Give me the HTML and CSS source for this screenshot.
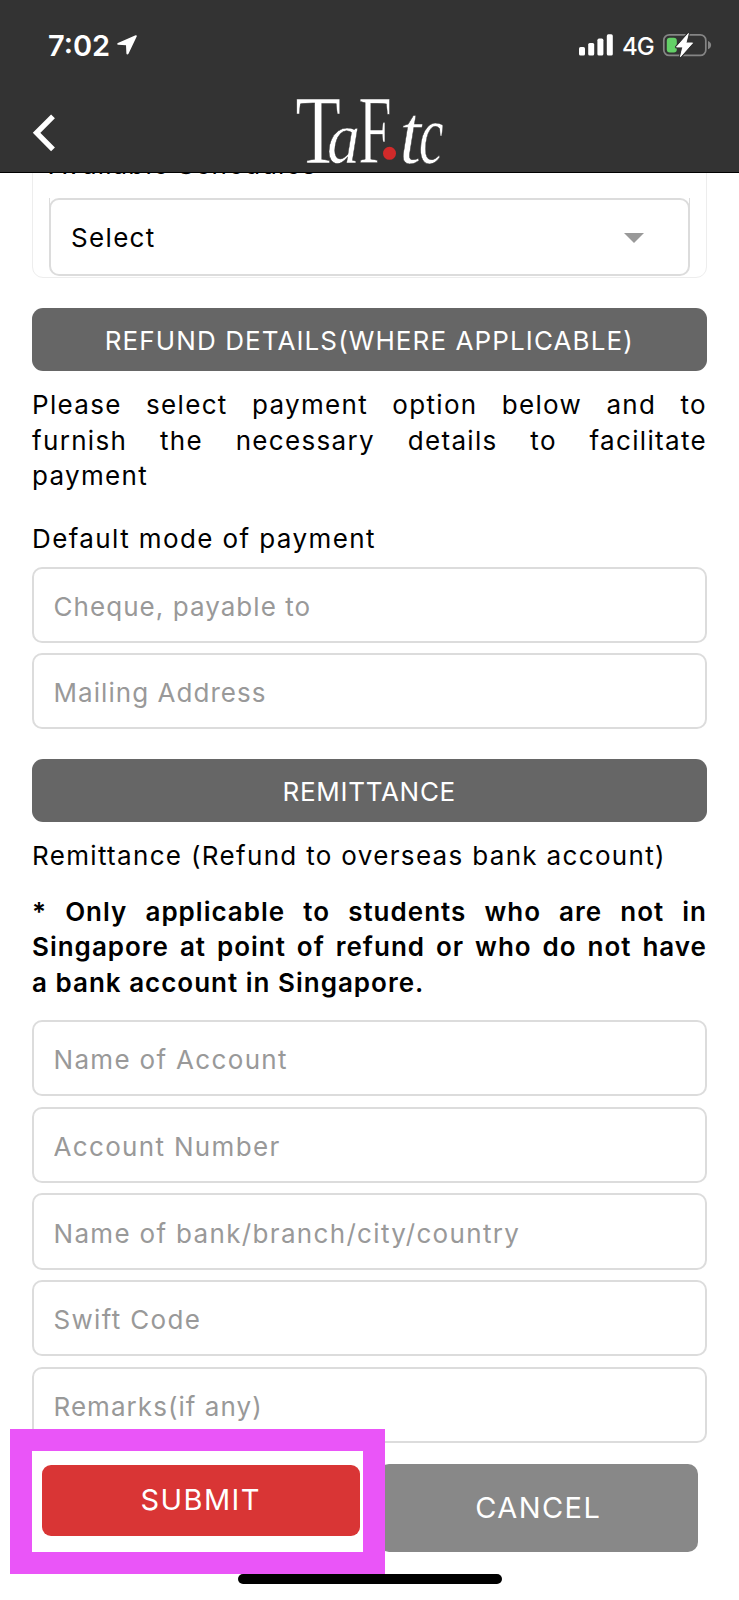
FILE: index.html
```html
<!DOCTYPE html>
<html lang="en">
<head>
    <meta charset="UTF-8">
    <meta name="viewport" content="width=device-width, initial-scale=1.0">
    <title>TaF.tc - Refund Details</title>
    <link rel="stylesheet" href="styles.css">
</head>
<body>
    <header class="header">
        <!-- Phone status bar -->
        <div class="status-bar">
            <div class="status-left">
                <span class="time">7:02</span>
                <svg class="location" width="20" height="20" viewBox="0 0 20 20">
                    <path d="M18.6 0.3 L0.9 7.9 C-0.2 8.5 0 9.7 1.2 9.8 L9 10.2 L9.4 18.6 C9.6 19.8 10.9 19.9 11.5 18.8 L19.7 1.6 C20.1 0.6 19.5 0 18.6 0.3 Z" fill="#fff"/>
                </svg>
            </div>
            <div class="status-right">
                <svg class="signal" width="34" height="22" viewBox="0 0 34 22" fill="#fff">
                    <rect x="0" y="13" width="6" height="8.5" rx="1.6"/>
                    <rect x="9.2" y="9" width="6" height="12.5" rx="1.6"/>
                    <rect x="18.4" y="4.6" width="6" height="16.9" rx="1.6"/>
                    <rect x="27.8" y="0.3" width="6" height="21.2" rx="1.6"/>
                </svg>
                <span class="network">4G</span>
                <svg class="battery" width="50" height="26" viewBox="0 0 50 26">
                    <rect x="1.8" y="2.8" width="42" height="20.6" rx="5.5" fill="none" stroke="#858585" stroke-width="1.7"/>
                    <path d="M46 9 C50.2 10.4 50.2 15.8 46 17.2 Z" fill="#858585"/>
                    <rect x="4.8" y="5.8" width="10" height="14.8" rx="3" fill="#63d067"/>
                    <path d="M26.4 1.5 L14.5 15 H20.8 L18.4 24.8 L30.6 10.9 H24 Z" fill="#fff" stroke="#333" stroke-width="3" paint-order="stroke" stroke-linejoin="round"/>
                    <path d="M26.4 1.5 L14.5 15 H20.8 L18.4 24.8 L30.6 10.9 H24 Z" fill="#fff" stroke="#fff" stroke-width="0.8" stroke-linejoin="round"/>
                </svg>
            </div>
        </div>

        <nav class="nav">
            <a href="#" class="back" aria-label="Back">
                <svg width="24" height="38" viewBox="0 0 24 38">
                    <path d="M21 2.4 L4.6 18.8 L21 35.4" fill="none" stroke="#fff" stroke-width="5.4"/>
                </svg>
            </a>
            <svg class="logo" width="155" height="78" viewBox="292 93 155 78">
                <g class="logo-text">
                    <text x="295.5" y="163" font-size="98" textLength="45.5" lengthAdjust="spacingAndGlyphs">T</text>
                    <text class="italic" x="327" y="163" font-size="75" textLength="33" lengthAdjust="spacingAndGlyphs">a</text>
                    <text x="358.5" y="163" font-size="98" textLength="33" lengthAdjust="spacingAndGlyphs">F</text>
                    <text class="italic" x="399.5" y="163" font-size="84" textLength="21.5" lengthAdjust="spacingAndGlyphs">t</text>
                    <text class="italic" x="419" y="163" font-size="84" textLength="24.5" lengthAdjust="spacingAndGlyphs">c</text>
                </g>
                <circle cx="389.5" cy="153.3" r="6.5" fill="#d12a2a"/>
            </svg>
        </nav>
    </header>

    <main class="content">
        <div class="schedule-panel">
            <label class="schedule-label">Available Schedules</label>
            <div class="select">
                <span>Select</span>
                <svg class="caret" width="20" height="10" viewBox="0 0 20 10"><path d="M0 0 H20 L10 10 Z" fill="#999"/></svg>
            </div>
        </div>

        <h2 class="section-title refund-title">REFUND DETAILS(WHERE APPLICABLE)</h2>
        <p class="intro">Please select payment option below and to furnish the necessary details to facilitate payment</p>
        <p class="mode">Default mode of payment</p>
        <div class="fields">
            <input type="text" class="tight" placeholder="Cheque, payable to">
            <input type="text" class="tight" placeholder="Mailing Address">
        </div>

        <h2 class="section-title remittance-title">REMITTANCE</h2>
        <p class="remittance-text">Remittance (Refund to overseas bank account)</p>
        <p class="note">* Only applicable to students who are not in Singapore at point of refund or who do not have a&nbsp;bank account in Singapore.</p>
        <div class="fields">
            <input type="text" placeholder="Name of Account">
            <input type="text" placeholder="Account Number">
            <input type="text" placeholder="Name of bank/branch/city/country">
            <input type="text" placeholder="Swift Code">
            <input type="text" class="tight" placeholder="Remarks(if any)">
        </div>

        <div class="actions">
            <div class="submit-wrap">
                <div class="highlight"></div>
                <button type="submit" class="submit-btn">SUBMIT</button>
            </div>
            <button type="button" class="cancel-btn">CANCEL</button>
        </div>
    </main>

    <div class="home-indicator"></div>
</body>
</html>
```
FILE: styles.css
```css
* {
    box-sizing: border-box;
}

body {
    font-family: 'Inter', sans-serif;
    font-size: 26px;
    letter-spacing: 1.33px;
    line-height: 35.5px;
    margin: 0;
    height: 1600px;
    overflow: hidden;
    background: #fff;
    color: #000;
}

.header {
    height: 173px;
    background: #333;
    border-bottom: 1px solid #000;
}

.status-bar {
    display: flex;
    justify-content: space-between;
    height: 90px;
    padding: 0 27px 0 48px;
    color: #fff;
}

.status-left,
.status-right {
    display: flex;
    align-items: center;
}

.time {
    margin-top: 1px;
    font-size: 29px;
    font-weight: 600;
    letter-spacing: 0;
}

.location {
    margin-left: 7px;
}

.network {
    margin: 3px 8px 0 9px;
    font-size: 24px;
    font-weight: 500;
    letter-spacing: -0.8px;
}

.nav {
    display: flex;
    align-items: flex-start;
    height: 82px;
    padding-left: 32px;
}

.back {
    display: block;
    height: 38px;
    margin-top: 24px;
}

.logo {
    margin: 3px 0 0 236px;
}

.logo-text {
    font-family: 'Liberation Serif', serif;
    letter-spacing: 0;
    fill: #fff;
    stroke: #333;
    stroke-width: 0.5px;
}

.italic {
    font-style: italic;
}

.content {
    padding: 0 32px;
    overflow: hidden;
}

.schedule-panel {
    height: 132px;
    margin-top: -27px;
    padding: 0 16px;
    border: 1.5px solid #ededed;
    border-radius: 11px;
}

.schedule-label {
    display: block;
    height: 51px;
    letter-spacing: 1.15px;
}

.select {
    position: relative;
    display: flex;
    justify-content: space-between;
    align-items: center;
    height: 78px;
    padding: 2px 44px 0 20px;
    border: 2px solid #dcdcdc;
    border-radius: 10px;
}

/* Side borders run straight up past the rounded top corners */
.select::before {
    content: "";
    position: absolute;
    top: -2px;
    left: -2px;
    right: -2px;
    height: 14px;
    border-left: 1.5px solid #dcdcdc;
    border-right: 1.5px solid #dcdcdc;
}

.section-title {
    height: 63px;
    margin: 0 0 0 -0.5px;
    border-radius: 11px;
    background: #666;
    color: #fff;
    font-size: 26px;
    font-weight: 400;
    line-height: 65px;
    text-align: center;
}

.refund-title {
    margin-top: 30px;
    letter-spacing: 1.1px;
}

.remittance-title {
    margin-top: 30px;
    letter-spacing: 0.7px;
}

p {
    margin: 0;
}

.intro {
    margin-top: 16px;
    text-align: justify;
}

.mode {
    margin: 27.5px 0 10px;
    letter-spacing: 1.4px;
}

.remittance-text {
    margin-top: 16px;
}

.note {
    margin: 20px 0 19.5px;
    font-weight: 600;
    letter-spacing: 1px;
    text-align: justify;
}

.fields {
    display: flex;
    flex-direction: column;
    gap: 10.4px;
}

input {
    width: 100%;
    height: 76.3px;
    padding: 3px 19.5px 0;
    border: 2px solid #dcdcdc;
    border-radius: 10px;
    background: #fff;
    font: inherit;
    letter-spacing: inherit;
    outline: none;
}

input::placeholder {
    color: #999;
}

.tight {
    letter-spacing: 1.05px;
}

.actions {
    display: flex;
    align-items: flex-start;
    gap: 19px;
    padding: 21px 9.5px 30px;
}

.submit-wrap {
    position: relative;
    width: 318.5px;
    margin-top: 1px;
}

/* Box drawn round the submit button */
.highlight {
    position: absolute;
    top: -36px;
    left: -32px;
    width: 375.5px;
    height: 144.5px;
    border: 22px solid #ea55f8;
    background: #fff;
}

button {
    border: none;
    border-radius: 9px;
    padding: 0 0 2px;
    color: #fff;
    font-family: inherit;
    font-size: 29px;
    letter-spacing: 1.4px;
    cursor: pointer;
}

.submit-btn {
    position: relative;
    display: block;
    width: 100%;
    height: 71px;
    background: #d93535;
}

.cancel-btn {
    flex: 1;
    height: 88px;
    border-radius: 10px;
    background: #888;
}

.home-indicator {
    position: absolute;
    top: 1574px;
    left: 238px;
    width: 264px;
    height: 10px;
    border-radius: 5px;
    background: #000;
}
```
